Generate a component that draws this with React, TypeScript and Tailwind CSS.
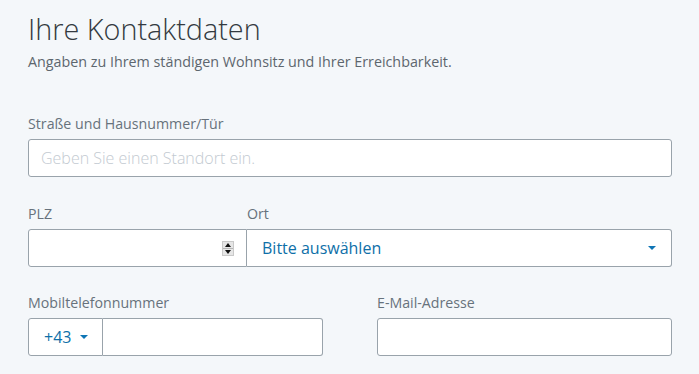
const font = { fontFamily: '"Open Sans", "Liberation Sans", sans-serif' };

function Caret({ className = "" }: { className?: string }) {
  return (
    <svg width="8" height="4" viewBox="0 0 8 4" className={className}>
      <path d="M0 0h8L4 4z" fill="currentColor" />
    </svg>
  );
}

function Spinner() {
  return (
    <div className="flex h-[15px] w-[12px] flex-col border border-[#c9c9c9] bg-[#e6e6e6]">
      <div className="flex flex-1 items-center justify-center border-b border-[#b5b5b5]">
        <svg width="6" height="4" viewBox="0 0 6 4">
          <path d="M0 4h6L3 0z" fill="#111" />
        </svg>
      </div>
      <div className="flex flex-1 items-center justify-center">
        <svg width="6" height="4" viewBox="0 0 6 4">
          <path d="M0 0h6L3 4z" fill="#111" />
        </svg>
      </div>
    </div>
  );
}

function Label({ children }: { children: React.ReactNode }) {
  return <div className="mb-[5px] text-[14.2px] leading-[20px] text-[#67727c]">{children}</div>;
}

export default function App() {
  return (
    <div className="min-h-screen bg-[#f4f7fa] pl-[28px] pt-[9px]" style={font}>
      <div className="w-[644px]">
        <h1 className="text-[28.8px] font-light leading-[40px] text-[#333a40]">Ihre Kontaktdaten</h1>
        <p className="mt-[3px] text-[14.3px] leading-[20px] text-[#5d666e]">
          Angaben zu Ihrem ständigen Wohnsitz und Ihrer Erreichbarkeit.
        </p>

        <div className="mt-[42px]">
          <Label>Straße und Hausnummer/Tür</Label>
          <div className="flex h-[38px] items-center rounded-[3px] border border-[#99a3ab] bg-white px-[12px] text-[16px] font-light text-[#c3cad1]">
            Geben Sie einen Standort ein.
          </div>
        </div>

        <div className="mt-[27px] flex">
          <div className="w-[219px]">
            <Label>PLZ</Label>
            <div className="flex h-[38px] items-center justify-end rounded-l-[3px] border border-[#99a3ab] bg-white pr-[12px]">
              <Spinner />
            </div>
          </div>
          <div className="flex-1">
            <Label>Ort</Label>
            <div className="flex h-[38px] items-center justify-between rounded-r-[3px] border border-l-0 border-[#99a3ab] bg-white pl-[15px] pr-[15px] text-[16px] text-[#0e6fa8]">
              <span>Bitte auswählen</span>
              <Caret className="text-[#0e75b5]" />
            </div>
          </div>
        </div>

        <div className="mt-[26px] grid grid-cols-2 gap-x-[54px]">
          <div>
            <Label>Mobiltelefonnummer</Label>
            <div className="flex h-[38px]">
              <div className="flex w-[75px] items-center gap-[9px] rounded-l-[3px] border border-[#99a3ab] bg-white pl-[15px] text-[16px] text-[#0e6fa8]">
                <span>+43</span>
                <Caret className="text-[#0e75b5]" />
              </div>
              <div className="flex-1 rounded-r-[3px] border border-l-0 border-[#99a3ab] bg-white" />
            </div>
          </div>
          <div>
            <Label>E-Mail-Adresse</Label>
            <div className="h-[38px] rounded-[3px] border border-[#99a3ab] bg-white" />
          </div>
        </div>
      </div>
    </div>
  );
}
